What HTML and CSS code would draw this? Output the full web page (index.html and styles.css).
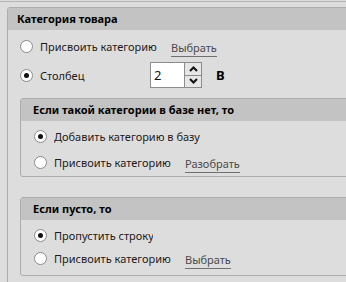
FILE: index.html
```html
<!DOCTYPE html>
<html lang="ru">
<head>
    <meta charset="UTF-8">
    <title>Категория товара</title>
    <link rel="stylesheet" href="styles.css">
</head>
<body>
    <div class="top-strip"></div>
    <div class="group outer">
        <div class="group-header">Категория товара</div>
        <div class="group-body">
            <div class="row row-first">
                <span class="radio"></span>
                <span class="label label-assign">Присвоить категорию</span>
                <span class="link">Выбрать</span>
            </div>
            <div class="row row-column">
                <span class="radio checked"></span>
                <span class="label label-column">Столбец</span>
                <div class="spinner">
                    <div class="spinner-value">2</div>
                    <div class="spinner-buttons">
                        <div class="spin-btn"><svg width="9" height="6" viewBox="0 0 9 6"><path d="M1 5 L4.5 1.5 L8 5" fill="none" stroke="#111" stroke-width="2"/></svg></div>
                        <div class="spin-btn"><svg width="9" height="6" viewBox="0 0 9 6"><path d="M1 1 L4.5 4.5 L8 1" fill="none" stroke="#111" stroke-width="2"/></svg></div>
                    </div>
                </div>
                <span class="unit">В</span>
            </div>

            <div class="group inner inner-missing">
                <div class="group-header">Если такой категории в базе нет, то</div>
                <div class="row row-a">
                    <span class="radio checked"></span>
                    <span class="label label-add">Добавить категорию в базу</span>
                </div>
                <div class="row row-b">
                    <span class="radio"></span>
                    <span class="label label-assign">Присвоить категорию</span>
                    <span class="link">Разобрать</span>
                </div>
            </div>

            <div class="group inner inner-empty">
                <div class="group-header">Если пусто, то</div>
                <div class="row row-c">
                    <span class="radio checked"></span>
                    <span class="label label-skip">Пропустить строку</span>
                </div>
                <div class="row row-d">
                    <span class="radio"></span>
                    <span class="label label-assign">Присвоить категорию</span>
                    <span class="link">Выбрать</span>
                </div>
            </div>
        </div>
    </div>
</body>
</html>
```

FILE: styles.css
```css
html, body {
    margin: 0;
    height: 100%;
    overflow: hidden;
}
body {
    background-color: #dddddd;
    font-family: 'Noto Sans', 'Open Sans', sans-serif;
    font-size: 11px;
    color: #1e1a1a;
}
.top-strip {
    height: 1px;
    border-bottom: 1px solid #b4b4b4;
}
.group {
    border: 1px solid #acacac;
    border-radius: 3px;
    background-color: #dddddd;
}
.outer {
    margin: 5px 0 0 7px;
    width: 420px;
    height: 320px;
}
.group-header {
    height: 22px;
    line-height: 22px;
    background-color: #c3c3c3;
    font-weight: bold;
    color: #000;
    padding-left: 9px;
}
.inner .group-header {
    padding-left: 12px;
}
.group-body {
    padding-left: 12px;
}
.row {
    display: flex;
    align-items: center;
}
.row-first {
    height: 30px;
    margin-top: 1px;
}
.row-column {
    height: 28px;
}
.radio {
    width: 11px;
    height: 11px;
    border: 1px solid #8a8a8a;
    border-radius: 50%;
    background-color: #fff;
    position: relative;
    flex-shrink: 0;
}
.radio.checked::after {
    content: "";
    position: absolute;
    left: 3px;
    top: 3px;
    width: 5px;
    height: 5px;
    border-radius: 50%;
    background-color: #111;
}
.label {
    margin-left: 7px;
    white-space: nowrap;
    overflow: hidden;
}
.label-assign {
    width: 131px;
}
.label-column {
    width: 110px;
}
.label-add {
    width: 148px;
}
.label-skip {
    width: 99px;
}
.link {
    color: #4a4a4a;
    border-bottom: 1px solid #707070;
    line-height: 15px;
    padding-bottom: 1px;
    margin-top: 4px;
}
.spinner {
    display: flex;
    height: 24px;
    border: 1px solid #8c8c8c;
    background-color: #fff;
}
.spinner-value {
    width: 33px;
    line-height: 24px;
    padding-left: 3px;
    box-sizing: border-box;
    color: #111;
    font-size: 13px;
}
.spinner-buttons {
    display: flex;
    flex-direction: column;
    width: 16px;
    border-left: 1px solid #8c8c8c;
}
.spin-btn {
    flex: 1;
    display: flex;
    align-items: center;
    justify-content: center;
    background-color: #e6e6e6;
}
.spin-btn + .spin-btn {
    border-top: 1px solid #8c8c8c;
}
.unit {
    margin-left: 14px;
    font-weight: bold;
    color: #000;
    font-size: 13px;
}
.inner {
    width: 400px;
    margin-left: 0;
}
.inner-missing {
    margin-top: 9px;
    height: 77px;
}
.inner-empty {
    margin-top: 20px;
    height: 77px;
}
.inner .row {
    padding-left: 13px;
}
.row-a {
    height: 28px;
    margin-top: 1px;
}
.row-b {
    height: 24px;
}
.row-c {
    height: 30px;
}
.row-d {
    height: 16px;
}
```
